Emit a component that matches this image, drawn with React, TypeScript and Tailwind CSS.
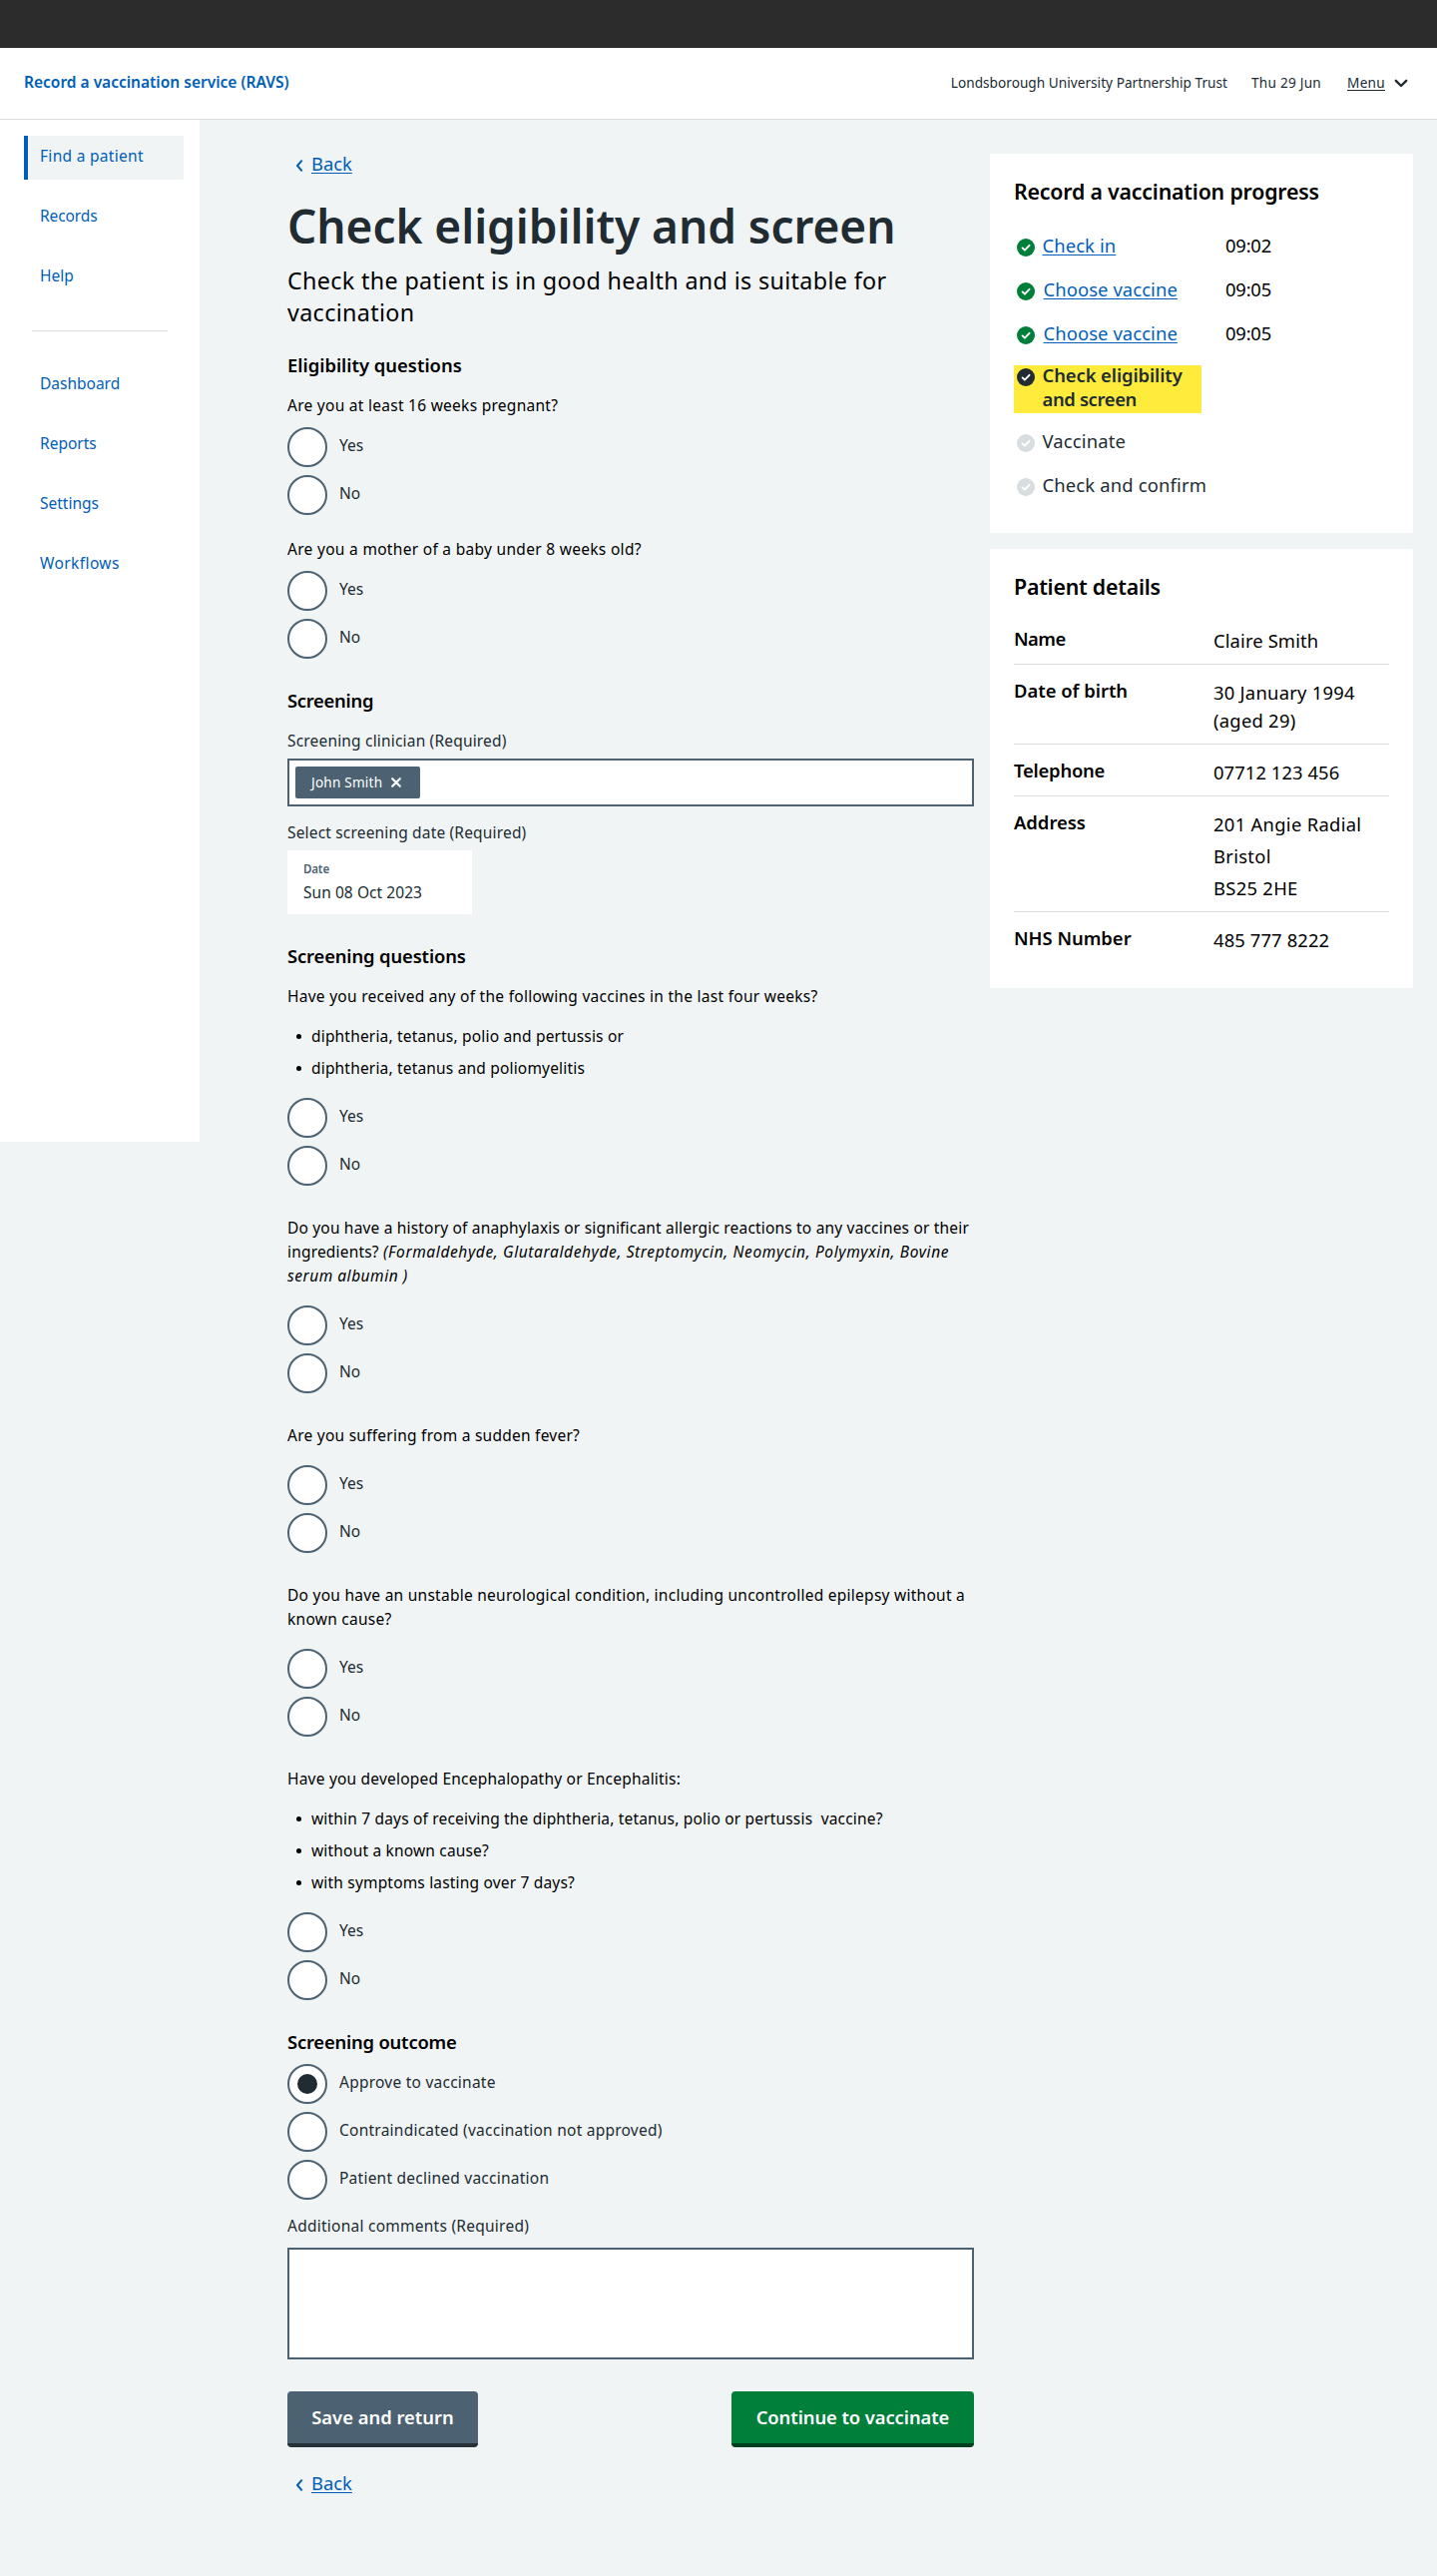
import type { ReactNode } from "react";

const body = "text-[15.5px] leading-6";

function BackLink() {
  return (
    <a href="#" className="flex h-6 w-fit items-center pl-2 text-[18.4px] leading-6 text-[#005eb8]">
      <svg className="mt-[4px] mr-2 h-3 w-2" viewBox="0 0 8 12" fill="none" stroke="currentColor" strokeWidth="2" strokeLinecap="round" strokeLinejoin="round">
        <path d="M6.2 1.2 2 6l4.2 4.8" />
      </svg>
      <span className="underline decoration-1 underline-offset-2">Back</span>
    </a>
  );
}

function Radio({ label, checked = false, track = "tracking-[0.24px]" }: { label: string; checked?: boolean; track?: string }) {
  return (
    <div className="flex h-10">
      <span className="flex size-10 items-center justify-center rounded-full border-2 border-[#4c6272] bg-white">
        {checked && <span className="size-5 rounded-full bg-[#212b32]" />}
      </span>
      <span className={`mt-[6px] ml-3 text-[15.5px] leading-6 whitespace-nowrap text-[#212b32] ${track}`}>{label}</span>
    </div>
  );
}

function YesNo({ className }: { className: string }) {
  return (
    <div className={`flex flex-col gap-2 ${className}`}>
      <Radio label="Yes" track="tracking-normal" />
      <Radio label="No" track="tracking-[-0.1px]" />
    </div>
  );
}

function Heading({ children, className = "" }: { children: ReactNode; className?: string }) {
  return <h2 className={`text-[18.4px] leading-6 font-semibold text-black ${className}`}>{children}</h2>;
}

function Question({ children, className = "" }: { children: ReactNode; className?: string }) {
  return <p className={`${body} whitespace-nowrap text-black ${className}`}>{children}</p>;
}

function Bullets({ items }: { items: string[] }) {
  return (
    <ul className="mt-4 flex flex-col gap-2 pl-[9px]">
      {items.map((t) => (
        <li key={t} className={`${body} flex tracking-[0.18px] whitespace-pre text-black`}>
          <span className="mt-[10px] mr-[10px] size-[5px] rounded-full bg-black" />
          {t}
        </li>
      ))}
    </ul>
  );
}

function NavItem({ label, active = false, track = "tracking-normal" }: { label: string; active?: boolean; track?: string }) {
  return (
    <a
      href="#"
      className={`flex h-11 w-40 border-l-4 pt-2 pl-3 ${body} ${track} text-[#005eb8] ${
        active ? "border-[#005eb8] bg-[#f0f4f5]" : "border-transparent"
      }`}
    >
      {label}
    </a>
  );
}

function Tick({ className }: { className: string }) {
  return (
    <svg className={`mt-[5px] ml-[3px] size-[18px] shrink-0 ${className}`} viewBox="0 0 18 18">
      <circle cx="9" cy="9" r="9" fill="currentColor" />
      <path d="m5.6 9.4 2.3 2.3 4.6-4.9" fill="none" stroke="#fff" strokeWidth="1.9" strokeLinecap="round" strokeLinejoin="round" />
    </svg>
  );
}

function DoneStep({ label, time, pad = "pl-[7.5px]" }: { label: string; time: string; pad?: string }) {
  return (
    <li className="flex h-6 text-[18.4px] leading-6">
      <div className="flex w-[212px]">
        <Tick className="text-[#007f3b]" />
        <span className={pad}>
          <a href="#" className="tracking-[0.1px] text-[#005eb8] underline decoration-1 underline-offset-2">{label}</a>
        </span>
      </div>
      <span className="tracking-[-0.2px] text-black">{time}</span>
    </li>
  );
}

function NextStep({ label }: { label: string }) {
  return (
    <li className="flex h-6 text-[18.4px] leading-6 text-[#212b32]">
      <Tick className="text-[#d8dde0]" />
      <span className="pl-[7.5px] tracking-[0.17px]">{label}</span>
    </li>
  );
}

function Row({
  label,
  lines,
  gap = "",
  track = "tracking-[0.12px]",
  labelTrack = "tracking-normal",
  last = false,
}: {
  label: string;
  lines: string[];
  gap?: string;
  track?: string;
  labelTrack?: string;
  last?: boolean;
}) {
  return (
    <div className={`flex pt-[14px] pb-[9px] text-[18.4px] text-black ${last ? "" : "border-b border-[#d8dde0]"}`}>
      <dt className={`w-[200px] leading-6 font-semibold ${labelTrack}`}>{label}</dt>
      <dd className={`flex flex-col leading-7 ${track} ${gap}`}>
        {lines.map((l) => (
          <span key={l}>{l}</span>
        ))}
      </dd>
    </div>
  );
}

export default function App() {
  return (
    <div className="min-h-[2581px] w-[1440px] bg-[#f0f4f5] font-['Noto_Sans',sans-serif]">
      <div className="h-12 bg-[#2c2c2c]" />
      <header className="flex h-[72px] justify-between border-b border-[#d8dde0] bg-white pt-[22px] pr-[29px] pl-6">
        <span className="text-[15.5px] leading-6 font-semibold text-[#005eb8]">Record a vaccination service (RAVS)</span>
        <div className="flex pt-px text-[13.6px] leading-6 text-[#212b32]">
          <span className="tracking-[0.04px]">Londsborough University Partnership Trust</span>
          <span className="ml-6 tracking-[0.25px]">Thu 29 Jun</span>
          <a href="#" className="ml-[26px] tracking-[0.3px] underline decoration-1 underline-offset-2">Menu</a>
          <svg className="mt-[8px] ml-[9px] h-[9px] w-[14px]" viewBox="0 0 14 9" fill="none" stroke="currentColor" strokeWidth="2.4" strokeLinecap="round" strokeLinejoin="round">
            <path d="M1.8 1.8 7 7l5.2-5.2" />
          </svg>
        </div>
      </header>

      <div className="flex">
        <nav className="h-[1024px] w-[200px] bg-white pt-4 pl-6">
          <div className="flex flex-col gap-4">
            <NavItem label="Find a patient" active track="tracking-[0.3px]" />
            <NavItem label="Records" track="tracking-[-0.1px]" />
            <NavItem label="Help" />
          </div>
          <div className="mt-[31px] mb-8 ml-2 h-px w-[136px] bg-[#d8dde0]" />
          <div className="flex flex-col gap-4">
            <NavItem label="Dashboard" />
            <NavItem label="Reports" />
            <NavItem label="Settings" />
            <NavItem label="Workflows" track="tracking-[0.4px]" />
          </div>
        </nav>

        <main className="ml-[88px] w-[688px] pt-8">
          <BackLink />
          <h1 className="mt-[22px] text-[46px] leading-[56px] font-semibold tracking-[-0.06px] whitespace-nowrap text-[#212b32]">
            Check eligibility and screen
          </h1>
          <p className="mt-[11px] text-[23.3px] leading-8 tracking-[0.35px] text-black">
            Check the patient is in good health and is suitable for
            <br />
            vaccination
          </p>

          <Heading className="mt-[25px]">Eligibility questions</Heading>
          <Question className="mt-4 tracking-[0.27px]">Are you at least 16 weeks pregnant?</Question>
          <YesNo className="mt-[10px]" />
          <Question className="mt-[22px] tracking-[0.3px]">Are you a mother of a baby under 8 weeks old?</Question>
          <YesNo className="mt-[10px]" />

          <Heading className="mt-[30px] tracking-[-0.28px]">Screening</Heading>
          <p className={`mt-4 ${body} tracking-[0.18px] text-[#212b32]`}>Screening clinician (Required)</p>
          <div className="mt-[6px] flex h-12 items-center border-2 border-[#4c6272] bg-white px-[6px]">
            <span className="flex h-8 w-[125px] items-center rounded-[2px] bg-[#4c6272] pl-4 text-[13.6px] text-white">
              <span className="-mt-[1px] leading-6 tracking-[0.2px]">John Smith</span>
              <svg className="ml-[9px] size-[10px]" viewBox="0 0 10 10" fill="none" stroke="currentColor" strokeWidth="2.1" strokeLinecap="round">
                <path d="m1.2 1.2 7.6 7.6M8.8 1.2 1.2 8.8" />
              </svg>
            </span>
          </div>
          <p className={`mt-[14px] ${body} tracking-[0.17px] text-[#212b32]`}>Select screening date (Required)</p>
          <div className="mt-[6px] h-16 w-[185px] bg-white pt-[9px] pl-4">
            <div className="text-[11.6px] leading-5 font-semibold tracking-[-0.2px] text-[#4c6272]">Date</div>
            <div className={`mt-px ${body} tracking-[0.06px] text-[#212b32]`}>Sun 08 Oct 2023</div>
          </div>

          <Heading className="mt-[30px] tracking-[-0.14px]">Screening questions</Heading>
          <Question className="mt-4 tracking-[0.27px]">Have you received any of the following vaccines in the last four weeks?</Question>
          <Bullets items={["diphtheria, tetanus, polio and pertussis or", "diphtheria, tetanus and poliomyelitis"]} />
          <YesNo className="mt-[18px]" />

          <Question className="mt-[30px] tracking-[0.18px]">
            Do you have a history of anaphylaxis or significant allergic reactions to any vaccines or their
            <br />
            ingredients? <em className="tracking-[0.62px]">(Formaldehyde, Glutaraldehyde, Streptomycin, Neomycin, Polymyxin, Bovine</em>
            <br />
            <em className="tracking-[0.52px]">serum albumin )</em>
          </Question>
          <YesNo className="mt-[18px]" />

          <Question className="mt-[30px] tracking-[0.25px]">Are you suffering from a sudden fever?</Question>
          <YesNo className="mt-[18px]" />

          <Question className="mt-[30px] tracking-[0.26px]">
            Do you have an unstable neurological condition, including uncontrolled epilepsy without a
            <br />
            known cause?
          </Question>
          <YesNo className="mt-[18px]" />

          <Question className="mt-[30px] tracking-[0.21px]">Have you developed Encephalopathy or Encephalitis:</Question>
          <Bullets
            items={[
              "within 7 days of receiving the diphtheria, tetanus, polio or pertussis  vaccine?",
              "without a known cause?",
              "with symptoms lasting over 7 days?",
            ]}
          />
          <YesNo className="mt-[18px]" />

          <Heading className="mt-[30px] tracking-[-0.2px]">Screening outcome</Heading>
          <div className="mt-[10px] flex flex-col gap-2">
            <Radio label="Approve to vaccinate" checked />
            <Radio label="Contraindicated (vaccination not approved)" />
            <Radio label="Patient declined vaccination" />
          </div>
          <p className={`mt-[14px] ${body} tracking-[0.25px] text-[#212b32]`}>Additional comments (Required)</p>
          <div className="mt-[10px] h-28 border-2 border-[#4c6272] bg-white" />

          <div className="mt-8 mb-6 flex justify-between">
            <button className="flex h-14 w-[191px] justify-center rounded-[4px] border-b-4 border-[#263139] bg-[#4c6272] pt-[14px] text-[18.4px] leading-6 font-semibold text-white">
              Save and return
            </button>
            <button className="flex h-14 w-[243px] justify-center rounded-[4px] border-b-4 border-[#00401e] bg-[#007f3b] pt-[14px] text-[18.4px] leading-6 font-semibold tracking-[-0.08px] text-white">
              Continue to vaccinate
            </button>
          </div>
          <BackLink />
        </main>

        <aside className="ml-4 w-[424px] pt-[34px]">
          <section className="h-[380px] bg-white px-6 pt-[22px]">
            <h3 className="text-[21.3px] leading-8 font-semibold tracking-[-0.18px] text-black">Record a vaccination progress</h3>
            <ol className="mt-[26px] flex flex-col gap-5">
              <DoneStep label="Check in" time="09:02" />
              <DoneStep label="Choose vaccine" time="09:05" pad="pl-[8.5px]" />
              <DoneStep label="Choose vaccine" time="09:05" pad="pl-[8.5px]" />
              <li className="-mb-[4px] flex h-12 w-[188px] bg-[#ffeb3b] text-[18.4px] leading-6 font-semibold text-[#212b32]">
                <div className="-mt-[2px] flex">
                  <Tick className="text-[#212b32]" />
                  <span className="pl-[7.5px] tracking-[-0.08px]">
                    Check eligibility
                    <br />
                    <span className="tracking-[-0.35px]">and screen</span>
                  </span>
                </div>
              </li>
              <NextStep label="Vaccinate" />
              <NextStep label="Check and confirm" />
            </ol>
          </section>

          <section className="mt-4 h-[440px] bg-white px-6 pt-[22px]">
            <h3 className="text-[21.3px] leading-8 font-semibold tracking-[-0.2px] text-black">Patient details</h3>
            <dl className="mt-[10px]">
              <Row label="Name" lines={["Claire Smith"]} labelTrack="tracking-[-0.5px]" />
              <Row label="Date of birth" lines={["30 January 1994", "(aged 29)"]} track="tracking-[0.25px]" />
              <Row label="Telephone" lines={["07712 123 456"]} labelTrack="tracking-[-0.2px]" track="tracking-[0.08px]" />
              <Row label="Address" lines={["201 Angie Radial", "Bristol", "BS25 2HE"]} gap="gap-1" track="tracking-[0.3px]" />
              <Row label="NHS Number" lines={["485 777 8222"]} last />
            </dl>
          </section>
        </aside>
      </div>
    </div>
  );
}
